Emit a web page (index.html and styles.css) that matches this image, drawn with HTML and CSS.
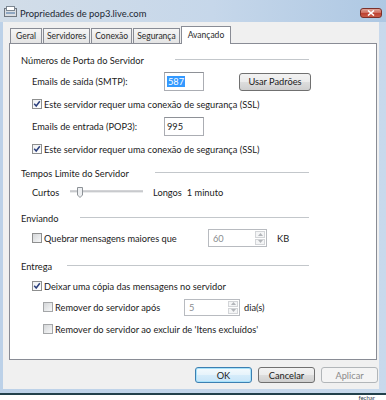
FILE: index.html
```html
<!DOCTYPE html>
<html lang="pt-BR">
<head>
    <meta charset="UTF-8">
    <meta name="viewport" content="width=device-width, initial-scale=1.0">
    <title>Propriedades de pop3.live.com</title>
    <link rel="stylesheet" href="styles.css">
</head>
<body>
    <div class="window">
        <div class="titlebar">
            <svg class="app-icon" width="13" height="11" viewBox="0 0 13 11">
                <rect x="0.5" y="2.5" width="12" height="8" fill="#d9dde2" stroke="#6f7780"/>
                <rect x="2.5" y="0.5" width="8" height="4" fill="#fff" stroke="#7d8791"/>
                <rect x="2" y="6" width="9" height="2" fill="#8fa7c2"/>
            </svg>
            <span class="title">Propriedades de pop3.live.com</span>
            <button class="close-button" aria-label="Fechar">
                <svg width="8" height="6" viewBox="0 0 8 6">
                    <path d="M1 0.5 L7 5.5 M7 0.5 L1 5.5" stroke="#fff" stroke-width="1.6"/>
                </svg>
            </button>
        </div>

        <div class="frame">
            <div class="dialog">
                <div class="tabs">
                    <div class="tab">Geral</div>
                    <div class="tab">Servidores</div>
                    <div class="tab">Conexão</div>
                    <div class="tab">Segurança</div>
                    <div class="tab active">Avançado</div>
                </div>

                <div class="panel">
                    <!-- portas -->
                    <div class="group-head">
                        <span class="group-title ports">Números de Porta do Servidor</span>
                        <span class="rule"></span>
                    </div>
                    <div class="row port-row first">
                        <span class="field-label">Emails de saída (SMTP):</span>
                        <div class="textbox"><span class="selected-text">587</span></div>
                        <button class="btn defaults">Usar Padrões</button>
                    </div>
                    <div class="check-row">
                        <span class="check on"><svg width="8" height="8" viewBox="0 0 8 8"><path d="M1.2 3.8 L3.2 6 L6.8 1.2" fill="none" stroke="#2b3f7c" stroke-width="1.5"/></svg></span>
                        Este servidor requer uma conexão de segurança (SSL)
                    </div>
                    <div class="row port-row">
                        <span class="field-label">Emails de entrada (POP3):</span>
                        <div class="textbox">995</div>
                    </div>
                    <div class="check-row">
                        <span class="check on"><svg width="8" height="8" viewBox="0 0 8 8"><path d="M1.2 3.8 L3.2 6 L6.8 1.2" fill="none" stroke="#2b3f7c" stroke-width="1.5"/></svg></span>
                        Este servidor requer uma conexão de segurança (SSL)
                    </div>

                    <!-- tempos limite -->
                    <div class="group-head spaced">
                        <span class="group-title timeouts">Tempos Limite do Servidor</span>
                        <span class="rule"></span>
                    </div>
                    <div class="row slider-row">
                        <span class="slider-label">Curtos</span>
                        <svg class="slider" width="74" height="11" viewBox="0 0 74 11">
                            <rect x="0" y="3.5" width="73" height="2" fill="#d6d8da"/>
                            <rect x="0" y="3.5" width="73" height="1" fill="#b9bcc0"/>
                            <path d="M7.5 0.5 H12.5 V8 L10 10.5 L7.5 8 Z" fill="#eef0f2" stroke="#8d9297"/>
                        </svg>
                        <span>Longos</span>
                        <span class="slider-value">1 minuto</span>
                    </div>

                    <!-- enviando -->
                    <div class="group-head spaced-more">
                        <span class="group-title sending">Enviando</span>
                        <span class="rule"></span>
                    </div>
                    <div class="row send-row">
                        <span class="check-label split">
                            <span class="check"></span>
                            Quebrar mensagens maiores que
                        </span>
                        <div class="spin split-size">
                            <span class="spin-value">60</span>
                            <span class="spin-arrows">
                                <span class="arrow"><svg width="5" height="3" viewBox="0 0 5 3"><path d="M0 3 L2.5 0 L5 3 Z" fill="#b3b6ba"/></svg></span>
                                <span class="arrow"><svg width="5" height="3" viewBox="0 0 5 3"><path d="M0 0 L2.5 3 L5 0 Z" fill="#b3b6ba"/></svg></span>
                            </span>
                        </div>
                        <span class="unit">KB</span>
                    </div>

                    <!-- entrega -->
                    <div class="group-head spaced-more">
                        <span class="group-title delivery">Entrega</span>
                        <span class="rule"></span>
                    </div>
                    <div class="check-row keep">
                        <span class="check on"><svg width="8" height="8" viewBox="0 0 8 8"><path d="M1.2 3.8 L3.2 6 L6.8 1.2" fill="none" stroke="#2b3f7c" stroke-width="1.5"/></svg></span>
                        Deixar uma cópia das mensagens no servidor
                    </div>
                    <div class="row remove-row">
                        <span class="check-label remove">
                            <span class="check dim"></span>
                            Remover do servidor após
                        </span>
                        <div class="spin days">
                            <span class="spin-value">5</span>
                            <span class="spin-arrows">
                                <span class="arrow"><svg width="5" height="3" viewBox="0 0 5 3"><path d="M0 3 L2.5 0 L5 3 Z" fill="#b3b6ba"/></svg></span>
                                <span class="arrow"><svg width="5" height="3" viewBox="0 0 5 3"><path d="M0 0 L2.5 3 L5 0 Z" fill="#b3b6ba"/></svg></span>
                            </span>
                        </div>
                        <span class="unit near">dia(s)</span>
                    </div>
                    <div class="check-row sub">
                        <span class="check dim"></span>
                        Remover do servidor ao excluir de 'Itens excluídos'
                    </div>
                </div>

                <div class="actions">
                    <button class="btn default">OK</button>
                    <button class="btn">Cancelar</button>
                    <button class="btn" disabled>Aplicar</button>
                </div>
            </div>
        </div>
    </div>
    <div class="below"><span>fechar</span></div>
</body>
</html>
```

FILE: styles.css
```css
:root {
    --dialog: #f0f0f0;
    --border: #898c95;
    --text: #1b1b1b;
    --rule: #c3c7cb;
}

body {
    margin: 0;
    width: 386px;
    height: 400px;
    overflow: hidden;
    background: #fff;
    font-family: Lato, 'Segoe UI', sans-serif;
    font-size: 9.25px;
    color: var(--text);
}

/* window chrome */
.window {
    background: linear-gradient(to right, #bcd1e8, #c8d9ec);
    border-bottom: 2px solid #22404b;
}

.titlebar {
    height: 22px;
    display: flex;
    align-items: center;
    padding: 0 4px 0 4px;
    background: linear-gradient(to right, #d2dde8, #c6d7ea 55%, #aec8e3);
}

.app-icon {
    margin-top: 1px;
}

.title {
    margin-left: 3px;
    font-size: 9.4px;
    color: #1c2733;
    margin-top: 4px;
}

.close-button {
    margin-left: auto;
    align-self: flex-start;
    margin-top: 8px;
    width: 22px;
    height: 10px;
    padding: 0;
    border: 1px solid #7b302a;
    border-radius: 3px;
    background: linear-gradient(#e0a69b, #cf6a5b 50%, #bd3f30 51%, #c85b48);
    display: flex;
    align-items: center;
    justify-content: center;
}

.frame {
    padding: 0 7px 4px 3px;
}

.dialog {
    background: var(--dialog);
    padding: 4px 2px 6px 6px;
}

/* tabs */
.tabs {
    display: flex;
    align-items: flex-end;
    height: 17px;
    margin-left: 1px;
}

.tab {
    box-sizing: border-box;
    min-width: 32px;
    height: 15px;
    padding: 0 3px;
    margin-right: 1px;
    border: 1px solid var(--border);
    border-bottom: none;
    background: linear-gradient(#f6f6f6, #e4e4e4);
    display: flex;
    align-items: center;
    justify-content: center;
    font-size: 8.5px;
    color: #2a2a2a;
}

.tab.active {
    height: 18px;
    margin-bottom: -1px;
    padding: 0 6px 2px;
    background: #fff;
    position: relative;
    z-index: 1;
}

.panel {
    box-sizing: border-box;
    height: 317px;
    background: #fff;
    border: 1px solid var(--border);
    padding: 9px 0 0 11px;
}

/* group headings */
.group-head {
    display: flex;
    align-items: center;
    height: 14px;
    width: 288px;
}

.group-head.spaced { margin-top: 10px; }
.group-head.spaced-more { margin-top: 12px; }

.group-title { flex: none; }
.group-title.ports { width: 154px; }
.group-title.timeouts { width: 134px; }
.group-title.sending { width: 59px; }
.group-title.delivery { width: 46px; }

.rule {
    flex: 1;
    border-top: 1px solid var(--rule);
    margin-top: -2px;
}

/* rows */
.row {
    display: flex;
    align-items: center;
    margin-left: 11px;
}

.port-row {
    height: 19px;
    margin-top: 6px;
}

.port-row.first { margin-top: 5px; }

.field-label { width: 132px; }

.textbox {
    box-sizing: border-box;
    width: 40px;
    height: 19px;
    border: 1px solid #abadb3;
    border-top-color: #8e9197;
    background: #fff;
    padding-left: 2px;
    display: flex;
    align-items: center;
}

.selected-text {
    background: #3399ff;
    color: #fff;
    padding: 0 1px;
    line-height: 11px;
}

.check-row {
    display: flex;
    align-items: center;
    height: 14px;
    margin-left: 11px;
    margin-top: 6px;
}

.check-row.keep { margin-top: 6px; }
.check-row.sub { margin-left: 22px; margin-top: 6px; }

.check {
    box-sizing: border-box;
    flex: none;
    width: 10px;
    height: 10px;
    margin-right: 2px;
    border: 1px solid #8e8f8f;
    background: linear-gradient(135deg, #d4d6d8, #f7f8f9);
    display: inline-flex;
    align-items: center;
    justify-content: center;
}

.check.on {
    background: linear-gradient(135deg, #eef0f2, #ffffff);
}

.check.dim {
    border-color: #a4a6a8;
}

.check-label {
    display: flex;
    align-items: center;
}

.check-label.split { width: 176px; }
.check-label.remove { width: 141px; }

.slider-row {
    height: 14px;
    margin-top: 5px;
}

.slider-label { width: 38px; }

.slider {
    margin: 0 9px 0 0;
}

.slider-value { margin-left: 5px; }

.send-row {
    height: 18px;
    margin-top: 4px;
}

.remove-row {
    height: 18px;
    margin-top: 5px;
    margin-left: 22px;
}

/* spin boxes */
.spin {
    box-sizing: border-box;
    display: flex;
    height: 18px;
    border: 1px solid #b8bbc0;
    background: #fff;
}

.spin.split-size { width: 59px; }
.spin.days { width: 56px; height: 17px; }

.spin-value {
    flex: 1;
    padding-left: 4px;
    color: #8a8d90;
    display: flex;
    align-items: center;
}

.spin-arrows {
    width: 10px;
    display: flex;
    flex-direction: column;
    padding: 1px;
    gap: 1px;
}

.arrow {
    flex: 1;
    border: 1px solid #d3d5d8;
    background: #f4f5f6;
    display: flex;
    align-items: center;
    justify-content: center;
}

.unit { margin-left: 10px; }
.unit.near { margin-left: 4px; }

/* buttons */
.btn {
    box-sizing: border-box;
    font-family: inherit;
    font-size: 9.25px;
    color: var(--text);
    padding: 0;
    border: 1px solid #707070;
    border-radius: 3px;
    background: linear-gradient(#f2f2f2, #ebebeb 50%, #dddddd 51%, #cfcfcf);
}

.btn.defaults {
    width: 72px;
    height: 18px;
    margin-left: 35px;
}

.actions {
    display: flex;
    justify-content: flex-end;
    gap: 6px;
    margin-top: 7px;
    margin-right: -1px;
}

.actions .btn {
    width: 57px;
    height: 16px;
}

.btn.default {
    border-color: #3c7fb1;
    background: linear-gradient(#f4fafd, #e6f3fb 50%, #d6ecfa 51%, #c8e5f8);
    box-shadow: inset 0 0 0 1px #a6e2fb;
}

.btn:disabled {
    border-color: #b2b6b9;
    background: #f4f4f4;
    color: #8a8a8a;
}

.below {
    height: 5px;
    text-align: right;
    padding-right: 11px;
}

.below span {
    display: inline-block;
    vertical-align: top;
    font-size: 6px;
    line-height: 5px;
    color: #2a3a4a;
}
```
